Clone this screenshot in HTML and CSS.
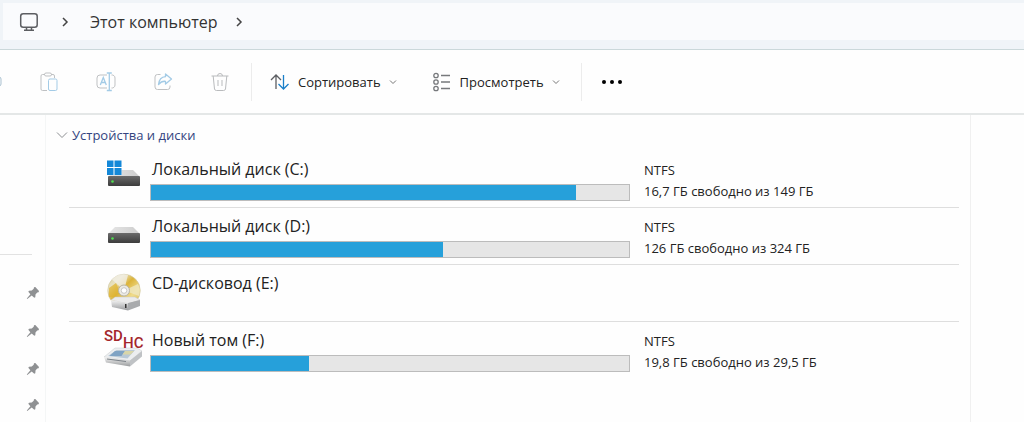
FILE: index.html
```html
<!DOCTYPE html>
<html lang="ru">
<head>
  <meta charset="utf-8">
  <title>Этот компьютер</title>
  <link rel="stylesheet" href="styles.css">
</head>
<body>
  <svg class="defs" aria-hidden="true">
    <symbol id="pin" viewBox="0 0 14 14">
      <path d="M8 1.2L9.3 1 13 5 12.600 6.300 11.200 6.500 9.500 8.500 9.300 11.200 8.300 11.800 5.700 9.500 1.300 13 .8 12.500 4.400 8.200 2.300 5.700 3 4.700 5.800 4.600 7.700 2.800Z"/>
    </symbol>
    <symbol id="down" viewBox="0 0 8 8">
      <path d="M1 2.500L4 5.500 7 2.500" fill="none" stroke="currentColor"/>
    </symbol>
    <symbol id="next" viewBox="0 0 8 10">
      <path d="M2 1L6 5 2 9" fill="none" stroke="currentColor" stroke-width="1.500"/>
    </symbol>
    <linearGradient id="top" x1="0" y1="0" x2="1" y2="0">
      <stop offset="0" stop-color="#e6e6e6"/>
      <stop offset="1" stop-color="#cdcdcd"/>
    </linearGradient>
    <linearGradient id="front" x1="0" y1="0" x2="0" y2="1">
      <stop offset="0" stop-color="#6b6b6b"/>
      <stop offset="1" stop-color="#3c3c3c"/>
    </linearGradient>
    <linearGradient id="gold" x1="0" y1="0" x2="1" y2="1">
      <stop offset="0" stop-color="#d9cf9a"/>
      <stop offset=".25" stop-color="#e9e3c4"/>
      <stop offset=".45" stop-color="#dcb43a"/>
      <stop offset=".7" stop-color="#f0dc8c"/>
      <stop offset="1" stop-color="#d6b44a"/>
    </linearGradient>
    <linearGradient id="silver" x1="0" y1="0" x2="0" y2="1">
      <stop offset="0" stop-color="#f4f4f4"/>
      <stop offset="1" stop-color="#9a9c9e"/>
    </linearGradient>
    <symbol id="drive" viewBox="0 0 32 16">
      <path d="M7 0H25L32 7H0Z" fill="url(#top)"/>
      <rect y="6" width="32" height="10" rx="1" fill="url(#front)"/>
      <circle cx="4.500" cy="11.500" r="1.300" fill="#4fe04f"/>
    </symbol>
  </svg>

  <nav class="address">
    <div class="path">
      <svg class="pc" viewBox="0 0 20 20" fill="none" stroke="#5c5e62" stroke-width="1.500">
        <rect x="1.700" y="1.700" width="16.500" height="13.500" rx="2.500"/>
        <path d="M7.500 15V18M12.500 15V18M5 18.300H15"/>
      </svg>
      <svg class="next"><use href="#next"/></svg>
      <a href="#">Этот компьютер</a>
      <svg class="next"><use href="#next"/></svg>
    </div>
  </nav>

  <div class="toolbar">
    <button class="tool cut" aria-label="Копировать">
      <svg viewBox="0 0 20 20" fill="none" stroke="#a9c0d0"><rect x="3" y="5" width="16" height="9" rx="2"/></svg>
    </button>
    <button class="tool" aria-label="Вставить">
      <svg viewBox="0 0 20 20" fill="none" stroke="#bfc1c3">
        <path d="M8 18.500H3.500A1.500 1.500 0 0 1 2 17V4A1.500 1.500 0 0 1 3.500 2.500H6M12 2.500H14A1.500 1.500 0 0 1 15.500 4V6"/>
        <rect x="5.500" y="1" width="7" height="3" rx="1.500"/>
        <rect x="9.500" y="7" width="8.500" height="11.500" rx="1.500" stroke="#a3cbe6"/>
      </svg>
    </button>
    <button class="tool" aria-label="Переименовать">
      <svg viewBox="0 0 20 20" fill="none" stroke="#bfc1c3">
        <path d="M11 16H4A3 3 0 0 1 1 13V6A3 3 0 0 1 4 3H11M15.500 3A3 3 0 0 1 19 6V13A3 3 0 0 1 15.500 16"/>
        <path d="M4.300 13L7.300 5.500 10.300 13M5.300 10.500H9.300M13.300 1V18.500M10.800 1H15.800M10.800 18.500H15.800" stroke="#a3cbe6" stroke-width="1.300"/>
      </svg>
    </button>
    <button class="tool" aria-label="Поделиться">
      <svg viewBox="0 0 20 20" fill="none" stroke="#bfc1c3">
        <path d="M7.500 2.500H4.500A2.500 2.500 0 0 0 2 5V15A2.500 2.500 0 0 0 4.500 17.500H14.500A2.500 2.500 0 0 0 17 15V13.500"/>
        <path d="M12.500 2L18.500 7 12.500 12V9.300C9.500 9 7.500 10 5.500 12.500 6 8 8.500 5 12.500 4.700Z" stroke="#a3cbe6" stroke-width="1.300" stroke-linejoin="round"/>
      </svg>
    </button>
    <button class="tool" aria-label="Удалить">
      <svg viewBox="0 0 20 20" fill="none" stroke="#b9bbbd">
        <path d="M1.500 4H18.500M7.500 4A2.500 2.500 0 0 1 12.500 4M3.200 4L4.500 17A2 2 0 0 0 6.500 18.500H13.500A2 2 0 0 0 15.500 17L16.800 4M8 8V14M12 8V14"/>
      </svg>
    </button>
    <span class="split"></span>
    <button class="menu sort">
      <svg class="glyph" viewBox="0 0 20 20" fill="none" stroke-width="1.300">
        <path d="M6 17V3M1 8L6 3 11 8" stroke="#5c5e62"/>
        <path d="M13.500 3V17M8.500 12L13.500 17 18.500 12" stroke="#1a7fc9"/>
      </svg>
      Сортировать
      <svg class="down"><use href="#down"/></svg>
    </button>
    <button class="menu view">
      <svg class="glyph" viewBox="0 0 20 20" fill="none" stroke="#77797c" stroke-width="1.300">
        <circle cx="4" cy="3.500" r="2.200"/>
        <circle cx="4" cy="10" r="2.200"/>
        <circle cx="4" cy="16.500" r="2.200"/>
        <path d="M9 3.500H18M9 10H18M9 16.500H18"/>
      </svg>
      Просмотреть
      <svg class="down"><use href="#down"/></svg>
    </button>
    <span class="split"></span>
    <button class="more" aria-label="Подробнее">
      <svg viewBox="0 0 20 4"><circle cx="2" cy="2" r="2"/><circle cx="10" cy="2" r="2"/><circle cx="18" cy="2" r="2"/></svg>
    </button>
  </div>

  <div class="window">
    <aside>
      <hr>
      <ul>
        <li><svg><use href="#pin"/></svg></li>
        <li><svg><use href="#pin"/></svg></li>
        <li><svg><use href="#pin"/></svg></li>
        <li><svg><use href="#pin"/></svg></li>
      </ul>
    </aside>

    <main>
      <button class="group">
        <svg viewBox="0 0 12 8" fill="none" stroke="#8c8e91"><path d="M1 1.500L6 6.500 11 1.500"/></svg>
        Устройства и диски
      </button>

      <div class="disk">
        <svg class="icon" viewBox="0 6 40 40">
          <use href="#drive" x="4" y="19" width="32" height="16"/>
          <path d="M2 9H17.500V24H2Z" fill="#fff"/>
          <path d="M3 9.500H9.500V16H3ZM10.500 9.500H17.500V16H10.500ZM3 17H9.500V24H3ZM10.500 17H17.500V24H10.500Z" fill="#1488d8"/>
        </svg>
        <div class="name">
          Локальный диск (C:)
          <div class="bar"><div class="fill" style="width: 89%"></div></div>
        </div>
        <div class="info">NTFS<br>16,7 ГБ свободно из 149 ГБ</div>
      </div>

      <div class="disk">
        <svg class="icon" viewBox="0 6 40 40">
          <use href="#drive" x="4" y="19" width="32" height="16"/>
        </svg>
        <div class="name">
          Локальный диск (D:)
          <div class="bar"><div class="fill" style="width: 61%"></div></div>
        </div>
        <div class="info">NTFS<br>126 ГБ свободно из 324 ГБ</div>
      </div>

      <div class="disk">
        <svg class="icon" viewBox="0 -2 40 40">
          <circle cx="20" cy="17.500" r="16.300" fill="url(#gold)" stroke="#cfc8a8" stroke-width=".6"/>
          <path d="M20 17.500L8 6.500A16 16 0 0 1 24 2Z" fill="#f1efe6" opacity=".8"/>
          <path d="M20 17.500L34 11A16 16 0 0 1 35 23Z" fill="#efe7c0" opacity=".8"/>
          <path d="M5 15L12 10 15 17 11 24 5 24Z" fill="#dfb32c" opacity=".7"/>
          <circle cx="20" cy="17.500" r="5.500" fill="#eceae4" stroke="#b9b5a4"/>
          <circle cx="20" cy="17.500" r="2.800" fill="#fff" stroke="#b5b5b5" stroke-width=".7"/>
          <path d="M7 27L11 24H31L36 27 24 31Z" fill="#ebebeb" stroke="#c4c4c4" stroke-width=".5"/>
          <path d="M7 27L24 30V37.500L8 34Z" fill="url(#silver)"/>
          <path d="M24 30L36 27V33L24 37.500Z" fill="#a9abad"/>
          <path d="M21 31H22.500V35H21Z" fill="#333"/>
        </svg>
        <div class="name">CD-дисковод (E:)</div>
      </div>

      <div class="disk">
        <svg class="icon" viewBox="0 0 40 40">
          <path d="M0 29L11 20H33L38 23 26 33Z" fill="#eceef0" stroke="#c6cacd" stroke-width=".5"/>
          <path d="M4 28L12.500 22H31L23.500 30.500Z" fill="#b9c9d6"/>
          <path d="M11 23H21L17.500 28H5.500Z" fill="#7fa3c4"/>
          <path d="M21 23H30L26.500 26.500H18.500Z" fill="#d9d6a8"/>
          <path d="M0 29L26 32.500V38.500L2 34.500Z" fill="url(#silver)"/>
          <path d="M26 32.500L38 23V28.500L26 38.500Z" fill="#bfc2c5"/>
          <path d="M3 31L22 33.500" stroke="#7b8288"/>
          <text x="0" y="13">SD</text>
          <text x="19" y="20">HC</text>
        </svg>
        <div class="name">
          Новый том (F:)
          <div class="bar"><div class="fill" style="width: 33%"></div></div>
        </div>
        <div class="info">NTFS<br>19,8 ГБ свободно из 29,5 ГБ</div>
      </div>
    </main>

    <div class="preview"></div>
  </div>
</body>
</html>
```

FILE: styles.css
```css
* {
  box-sizing: border-box;
}
body {
  margin: 0;
  min-height: 100vh;
  display: flex;
  flex-direction: column;
  background-color: #fefefe;
  color: #222;
  font-family: "Open Sans", "Noto Sans", sans-serif;
  font-size: 13px;
}
svg {
  display: block;
  flex-shrink: 0;
}
button {
  display: flex;
  align-items: center;
  padding: 0;
  border: 0;
  background: none;
  color: inherit;
  font: inherit;
}
.defs {
  position: absolute;
  width: 0;
  height: 0;
}

.address {
  height: 50px;
  padding: 3px 0 10px 3px;
  background-color: #f0f4f8;
  border-bottom: 1px solid #cbd8da;
}
.path {
  display: flex;
  align-items: center;
  height: 37px;
  padding-left: 16px;
  background-color: #fafbfd;
  font-size: 16px;
}
.path a {
  margin: 0 18px 0 21px;
  color: #333;
  text-decoration: none;
}
.pc {
  width: 20px;
  height: 20px;
  margin-right: 22px;
}
.next {
  width: 8px;
  height: 10px;
  color: #444;
}

.toolbar {
  display: flex;
  align-items: center;
  height: 65px;
  border-bottom: 2px solid #e4e7e7;
  overflow: hidden;
}
.tool {
  margin-right: 37px;
}
.tool svg {
  width: 20px;
  height: 20px;
}
.cut {
  margin-left: -18px;
}
.split {
  width: 1px;
  height: 38px;
  background-color: #ececec;
}
.tool + .split {
  margin-left: -16px;
}
.sort {
  margin: 0 35px 0 18px;
}
.view {
  margin-right: 21px;
}
.glyph {
  width: 20px;
  height: 20px;
  margin-right: 8px;
}
.down {
  width: 8px;
  height: 8px;
  margin-left: 8px;
  color: #777;
}
.more {
  margin-left: 20px;
}
.more svg {
  width: 20px;
  height: 4px;
}

.window {
  display: flex;
  flex: 1;
}
aside {
  width: 46px;
  border-right: 1px solid #f4f6f6;
}
aside hr {
  width: 32px;
  height: 1px;
  margin: 139px 0 19px;
  border: 0;
  background-color: #e2e2e2;
}
aside ul {
  margin: 0;
  padding: 0;
  list-style: none;
}
aside li {
  display: flex;
  align-items: center;
  height: 38px;
  padding-left: 26px;
}
aside li:last-child {
  height: 34px;
}
aside li svg {
  width: 14px;
  height: 14px;
  fill: #8f9193;
}
main {
  flex: 1;
  padding: 0 11px 0 23px;
}
.preview {
  width: 54px;
  border-left: 1px solid #f0f0f0;
}

.group {
  height: 36px;
  margin-left: -13px;
  padding-top: 4px;
  color: #33447f;
}
.group svg {
  width: 12px;
  height: 8px;
  margin-right: 4px;
}
.disk {
  display: grid;
  grid-template-columns: 81px minmax(0, 480px) 1fr;
  height: 57px;
  border-bottom: 1px solid #dedede;
}
.disk:last-child {
  border-bottom: 0;
}
.icon {
  width: 40px;
  height: 40px;
  margin: 6px 0 0 35px;
}
.icon text {
  fill: #a3262b;
  font: 500 15px Roboto, sans-serif;
}
.name {
  padding-top: 7px;
  font-size: 16px;
  line-height: 22px;
  text-indent: 2px;
}
.bar {
  height: 17px;
  margin-top: 4px;
  border: 1px solid #bcbcbc;
  background-color: #e6e6e6;
}
.fill {
  height: 100%;
  background-color: #26a0da;
}
.info {
  padding: 9px 0 0 14px;
  line-height: 21px;
}
```
